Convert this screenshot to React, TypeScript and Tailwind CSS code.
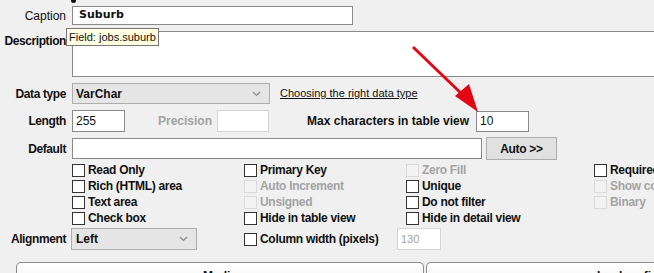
import React from 'react'

const font = "font-['Liberation_Sans',Arial,sans-serif]"

function Check({ label, disabled }: { label: string; disabled?: boolean }) {
  return (
    <div className="flex h-4 items-center gap-[3px] whitespace-nowrap">
      <span
        className={
          disabled
            ? 'h-[13px] w-[13px] shrink-0 border border-[#dadada] bg-[#f3f3f3]'
            : 'h-[13px] w-[13px] shrink-0 border border-[#333] bg-white'
        }
      />
      <span
        className={
          disabled
            ? 'text-[12px] font-bold tracking-[-0.3px] text-[#a3a3a3]'
            : 'text-[12px] font-bold tracking-[-0.3px] text-[#111]'
        }
      >
        {label}
      </span>
    </div>
  )
}

function Chevron() {
  return (
    <svg width="9" height="6" viewBox="0 0 9 6" className="shrink-0">
      <polyline points="1,1 4.5,4.5 8,1" fill="none" stroke="#8a8a8a" strokeWidth="1.2" />
    </svg>
  )
}

function Label({ children, className = '' }: { children: React.ReactNode; className?: string }) {
  return (
    <div
      className={`w-[66px] shrink-0 whitespace-nowrap text-right text-[12px] font-bold tracking-[-0.4px] text-[#111] ${className}`}
    >
      {children}
    </div>
  )
}

export default function App() {
  return (
    <div className={`relative h-[273px] w-[654px] overflow-hidden bg-[#f0f0f0] ${font}`}>
      {/* cut-off heading descender */}
      <div className="absolute left-[71px] top-0 h-[3px] w-[5px] rounded-b-sm bg-[#111]" />

      <div className="flex flex-col pt-[6px]">
        {/* Caption */}
        <div className="flex h-[19px] items-center gap-[6px]">
          <div className="w-[66px] shrink-0 text-right text-[12px] text-[#111]">Caption</div>
          <div className="flex h-[19px] w-[281px] items-center border border-[#8a8a8a] bg-white pl-[6px] font-['DejaVu_Sans',sans-serif] text-[11px] font-bold text-[#111]">
            Suburb
          </div>
        </div>

        {/* Description */}
        <div className="mt-[6px] flex items-start gap-[6px]">
          <Label className="pt-[1px]">Description</Label>
          <div className="h-[46px] w-[600px] shrink-0 border border-[#8a8a8a] bg-white" />
        </div>

        {/* Data type */}
        <div className="mt-[6px] flex h-[21px] items-center gap-[6px]">
          <Label>Data type</Label>
          <div className="flex h-[21px] w-[198px] shrink-0 items-center justify-between border border-[#adadad] bg-[#e5e5e5] pl-[3px] pr-[8px] text-[12px] font-bold text-[#111]">
            VarChar
            <Chevron />
          </div>
          <span className="ml-[4px] text-[11px] text-[#111] underline">Choosing the right data type</span>
        </div>

        {/* Length / Precision / Max */}
        <div className="mt-[6px] flex h-[22px] items-center">
          <Label>Length</Label>
          <div className="ml-[6px] flex h-[22px] w-[53px] items-center border border-[#8a8a8a] bg-white pl-[3px] text-[12px] text-[#111]">255</div>
          <span className="ml-[33px] text-[12px] font-bold text-[#a3a3a3]">Precision</span>
          <div className="ml-[5px] h-[22px] w-[52px] border border-[#d4d4d4] bg-white" />
          <span className="ml-[38px] text-[12px] font-bold text-[#111]">Max characters in table view</span>
          <div className="ml-[7px] flex h-[21px] w-[53px] items-center border border-[#8a8a8a] bg-white pl-[3px] text-[12px] text-[#111]">10</div>
        </div>

        {/* Default */}
        <div className="mt-[5px] flex h-[23px] items-center">
          <Label>Default</Label>
          <div className="ml-[6px] h-[21px] w-[410px] border border-[#8a8a8a] bg-white" />
          <div className="ml-[4px] flex h-[23px] w-[71px] items-center justify-center border border-[#adadad] bg-[#e1e1e1] text-[12px] font-bold tracking-[-0.3px] text-[#111]">
            Auto &gt;&gt;
          </div>
        </div>

        {/* Checkbox grid */}
        <div className="mt-[2px] flex pl-[72px]">
          <div className="flex w-[172px] shrink-0 flex-col">
            <Check label="Read Only" />
            <Check label="Rich (HTML) area" />
            <Check label="Text area" />
            <Check label="Check box" />
          </div>
          <div className="flex w-[162px] shrink-0 flex-col">
            <Check label="Primary Key" />
            <Check label="Auto Increment" disabled />
            <Check label="Unsigned" disabled />
            <Check label="Hide in table view" />
          </div>
          <div className="flex w-[188px] shrink-0 flex-col">
            <Check label="Zero Fill" disabled />
            <Check label="Unique" />
            <Check label="Do not filter" />
            <Check label="Hide in detail view" />
          </div>
          <div className="flex shrink-0 flex-col">
            <Check label="Required" />
            <Check label="Show column" disabled />
            <Check label="Binary" disabled />
          </div>
        </div>

        {/* Alignment */}
        <div className="mt-[2px] flex h-[22px] items-center">
          <Label>Alignment</Label>
          <div className="ml-[5px] flex h-[22px] w-[126px] items-center justify-between border border-[#adadad] bg-[#e5e5e5] pl-[4px] pr-[8px] text-[12px] font-bold text-[#111]">
            Left
            <Chevron />
          </div>
          <div className="ml-[47px] w-[153px] shrink-0">
            <Check label="Column width (pixels)" />
          </div>
          <div className="flex h-[22px] w-[44px] items-center border border-[#d4d4d4] bg-white pl-[3px] text-[11px] text-[#a3a3a3]">130</div>
        </div>

        {/* Tabs */}
        <div className="mt-[12px] flex gap-[2px] pl-[16px]">
          <div className="h-[20px] w-[408px] shrink-0 rounded-t-[5px] border border-b-0 border-[#8c8c8c] bg-gradient-to-b from-white to-[#f4f4f4] pt-[4px] text-center text-[12px] font-bold text-[#111]">
            Media
          </div>
          <div className="h-[20px] w-[260px] shrink-0 whitespace-nowrap rounded-t-[5px] border border-b-0 border-[#8c8c8c] bg-gradient-to-b from-white to-[#f4f4f4] pl-[170px] pt-[4px] text-[12px] font-bold text-[#111]">
            Lookup field
          </div>
        </div>
      </div>

      {/* Tooltip */}
      <div className="absolute left-[66px] top-[28px] h-[18px] whitespace-nowrap border border-[#767676] bg-[#ffffe1] px-[2px] text-[11px] leading-[16px] text-[#111]">
        Field: jobs.suburb
      </div>

      {/* Red arrow */}
      <svg className="pointer-events-none absolute left-0 top-0" width="654" height="273">
        <line x1="413" y1="47" x2="466" y2="98" stroke="#e30613" strokeWidth="3" />
        <polygon points="455,96 469,84 478,112" fill="#e30613" />
      </svg>
    </div>
  )
}
